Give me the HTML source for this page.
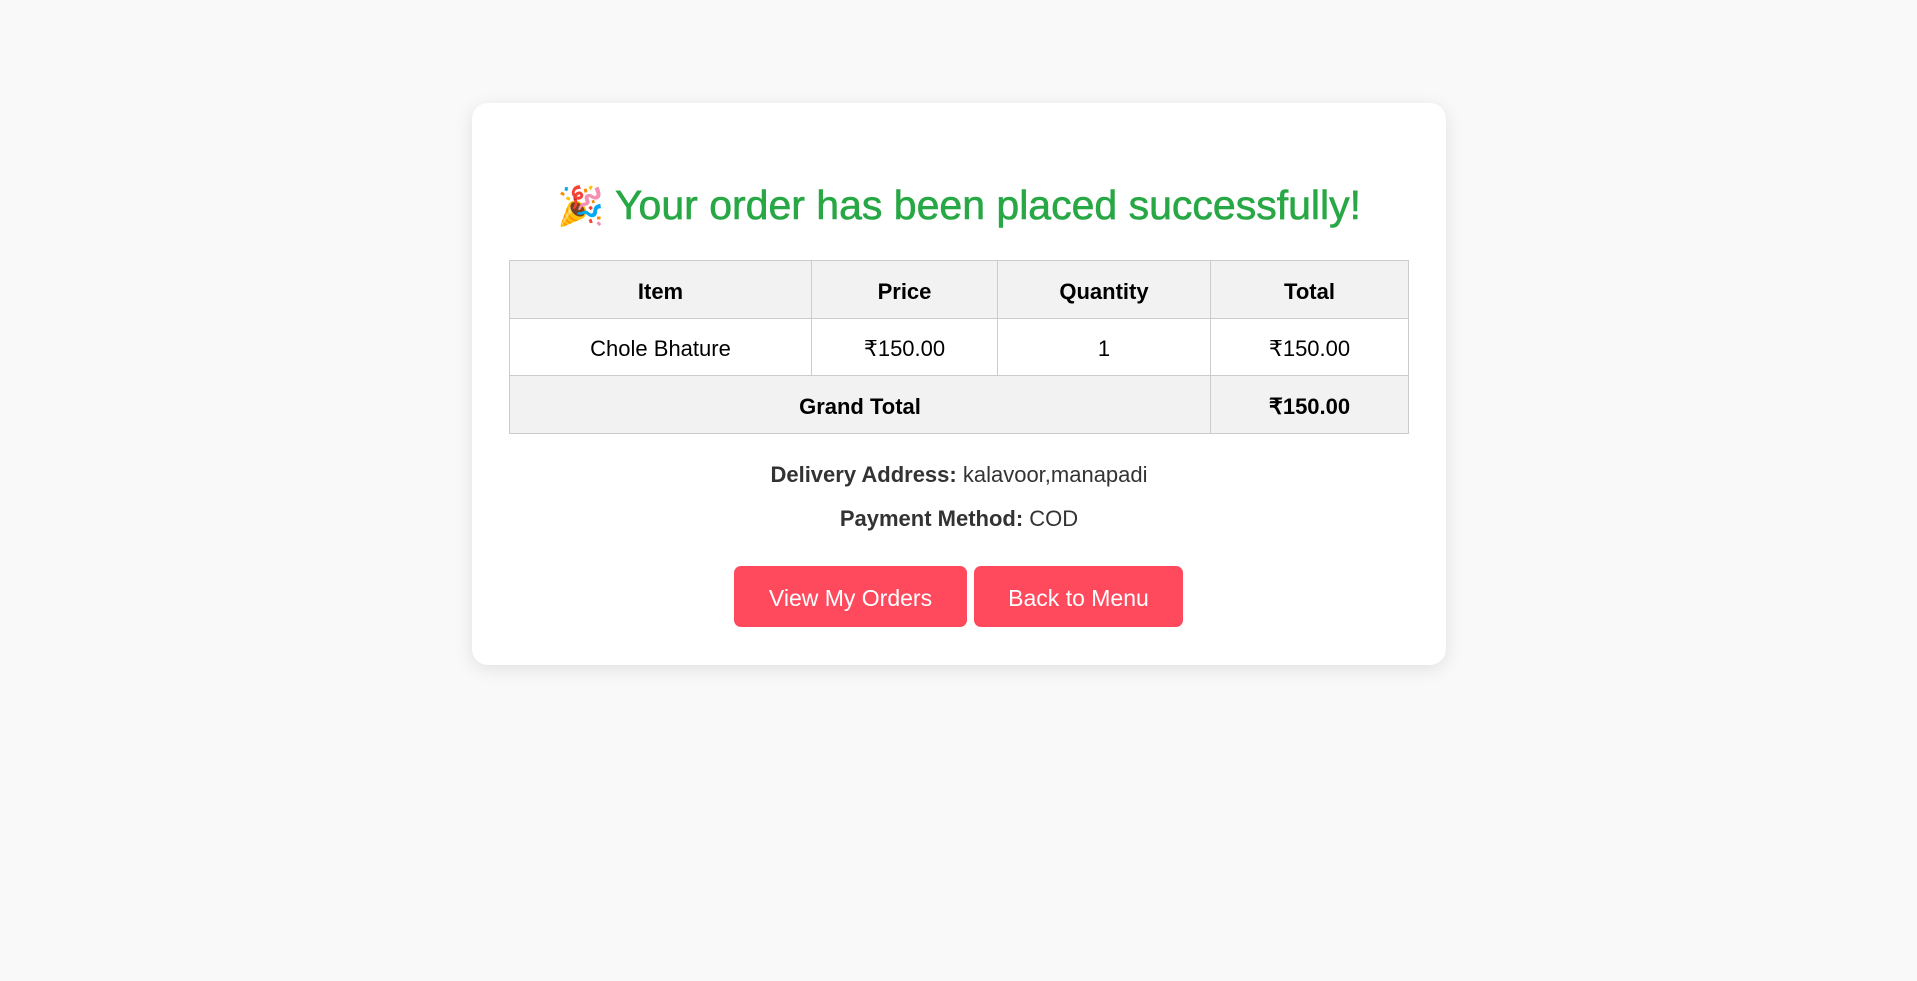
<!DOCTYPE html>
<html><head><meta charset="utf-8"><style>
html,body{margin:0;padding:0;background:#f9f9f9;width:1917px;height:981px;overflow:hidden;font-family:"Liberation Sans",sans-serif;}
.card{position:absolute;left:472px;top:103px;width:974px;height:562px;background:#fff;border-radius:16px;box-shadow:0 4px 18px rgba(0,0,0,0.1);}
h1{position:absolute;left:0;width:100%;margin:0;text-align:center;color:#28a745;font-size:41px;font-weight:normal;line-height:56px;-webkit-text-stroke:0.6px #28a745;}
table{position:absolute;left:37px;top:157px;border-collapse:collapse;width:900px;font-size:22px;color:#000;}
td,th{border:1px solid #ccc;height:51.5px;padding:5px 0 0 0;text-align:center;}
th{background:#f2f2f2;font-weight:bold;}
tr.g td{background:#f2f2f2;font-weight:bold;}
.info{position:absolute;left:0;width:100%;text-align:center;font-size:22px;color:#333;}
.btn{position:absolute;top:463px;height:61px;background:#ff4a5e;color:#fff;border-radius:7px;font-size:23px;line-height:64px;text-align:center;}
</style></head><body>
<div class="card">
<h1 style="top:74px;"><span style="font-size:38px">🎉</span> Your order has been placed successfully!</h1>
<table>
<tr><th style="width:301px">Item</th><th style="width:185px">Price</th><th style="width:212px">Quantity</th><th>Total</th></tr>
<tr><td>Chole Bhature</td><td>₹150.00</td><td>1</td><td>₹150.00</td></tr>
<tr class="g"><td colspan="3">Grand Total</td><td>₹150.00</td></tr>
</table>
<div class="info" style="top:359px"><b>Delivery Address:</b> kalavoor,manapadi</div>
<div class="info" style="top:403px"><b>Payment Method:</b> COD</div>
<div class="btn" style="left:262px;width:233px">View My Orders</div>
<div class="btn" style="left:502px;width:209px">Back to Menu</div>
</div>
</body></html>
